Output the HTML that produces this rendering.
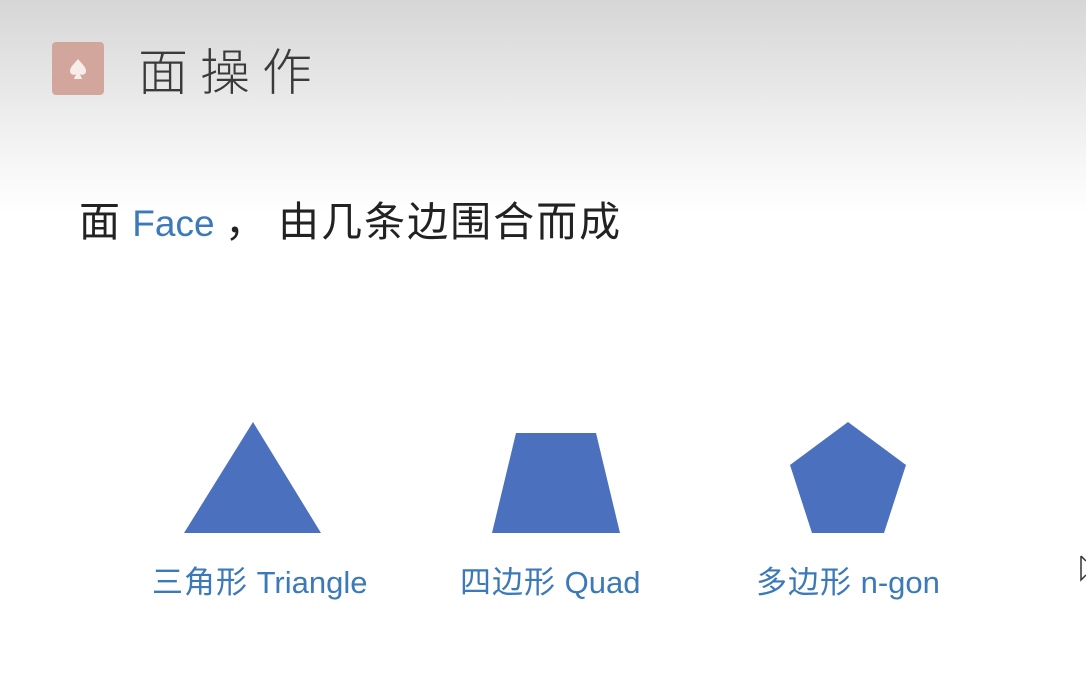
<!DOCTYPE html>
<html><head><meta charset="utf-8"><style>
body{margin:0;width:1086px;height:682px;overflow:hidden;background:linear-gradient(#d6d6d6 0px,#e8e8e8 90px,#f6f6f6 160px,#fff 215px,#fff);font-family:"Liberation Sans","Noto Sans CJK SC",sans-serif;position:relative}
.a{position:absolute;white-space:nowrap}
.ic{left:52px;top:42px;width:52px;height:53px;background:#d2a69c;border-radius:4px}
.t{left:138px;top:40px;font-size:50px;letter-spacing:12px;color:#3a3a3a;line-height:66px;font-weight:300}
.s{left:79px;top:197px;font-size:37px;color:#222;line-height:50px}
.s .c{font-size:41px;letter-spacing:2px}
.b{color:#3b79b9}
.l{top:563px;font-size:31px;color:#3b79b9;line-height:40px}
.l .c{letter-spacing:1px}
</style></head><body>
<div class="a ic"><svg width="52" height="53" viewBox="0 0 52 53"><path d="M26 17 C22 22 18 25 18 29 C18 32 21 34 24 32 L22 37 L30 37 L28 32 C31 34 34 32 34 29 C34 25 30 22 26 17Z" fill="#f6ece8"/></svg></div>
<div class="a t">面操作</div>
<div class="a s"><span class="c">面</span> <span class="b">Face</span> <span class="c">，</span> <span class="c">由几条边围合而成</span></div>
<svg class="a" style="left:0;top:0" width="1086" height="682">
<polygon points="253,422 321,533 184,533" fill="#4a70be"/>
<polygon points="516,433 596,433 620,533 492,533" fill="#4a70be"/>
<polygon points="848,422 906,465 884,533 812,533 790,465" fill="#4a70be"/>
<path d="M1081 556 L1086 561 M1081 556 L1081 580 L1086 575" stroke="#333" stroke-width="1.5" fill="none"/>
</svg>
<div class="a l" style="left:152px"><span class="c">三角形</span> Triangle</div>
<div class="a l" style="left:460px"><span class="c">四边形</span> Quad</div>
<div class="a l" style="left:756px"><span class="c">多边形</span> n-gon</div>
</body></html>
